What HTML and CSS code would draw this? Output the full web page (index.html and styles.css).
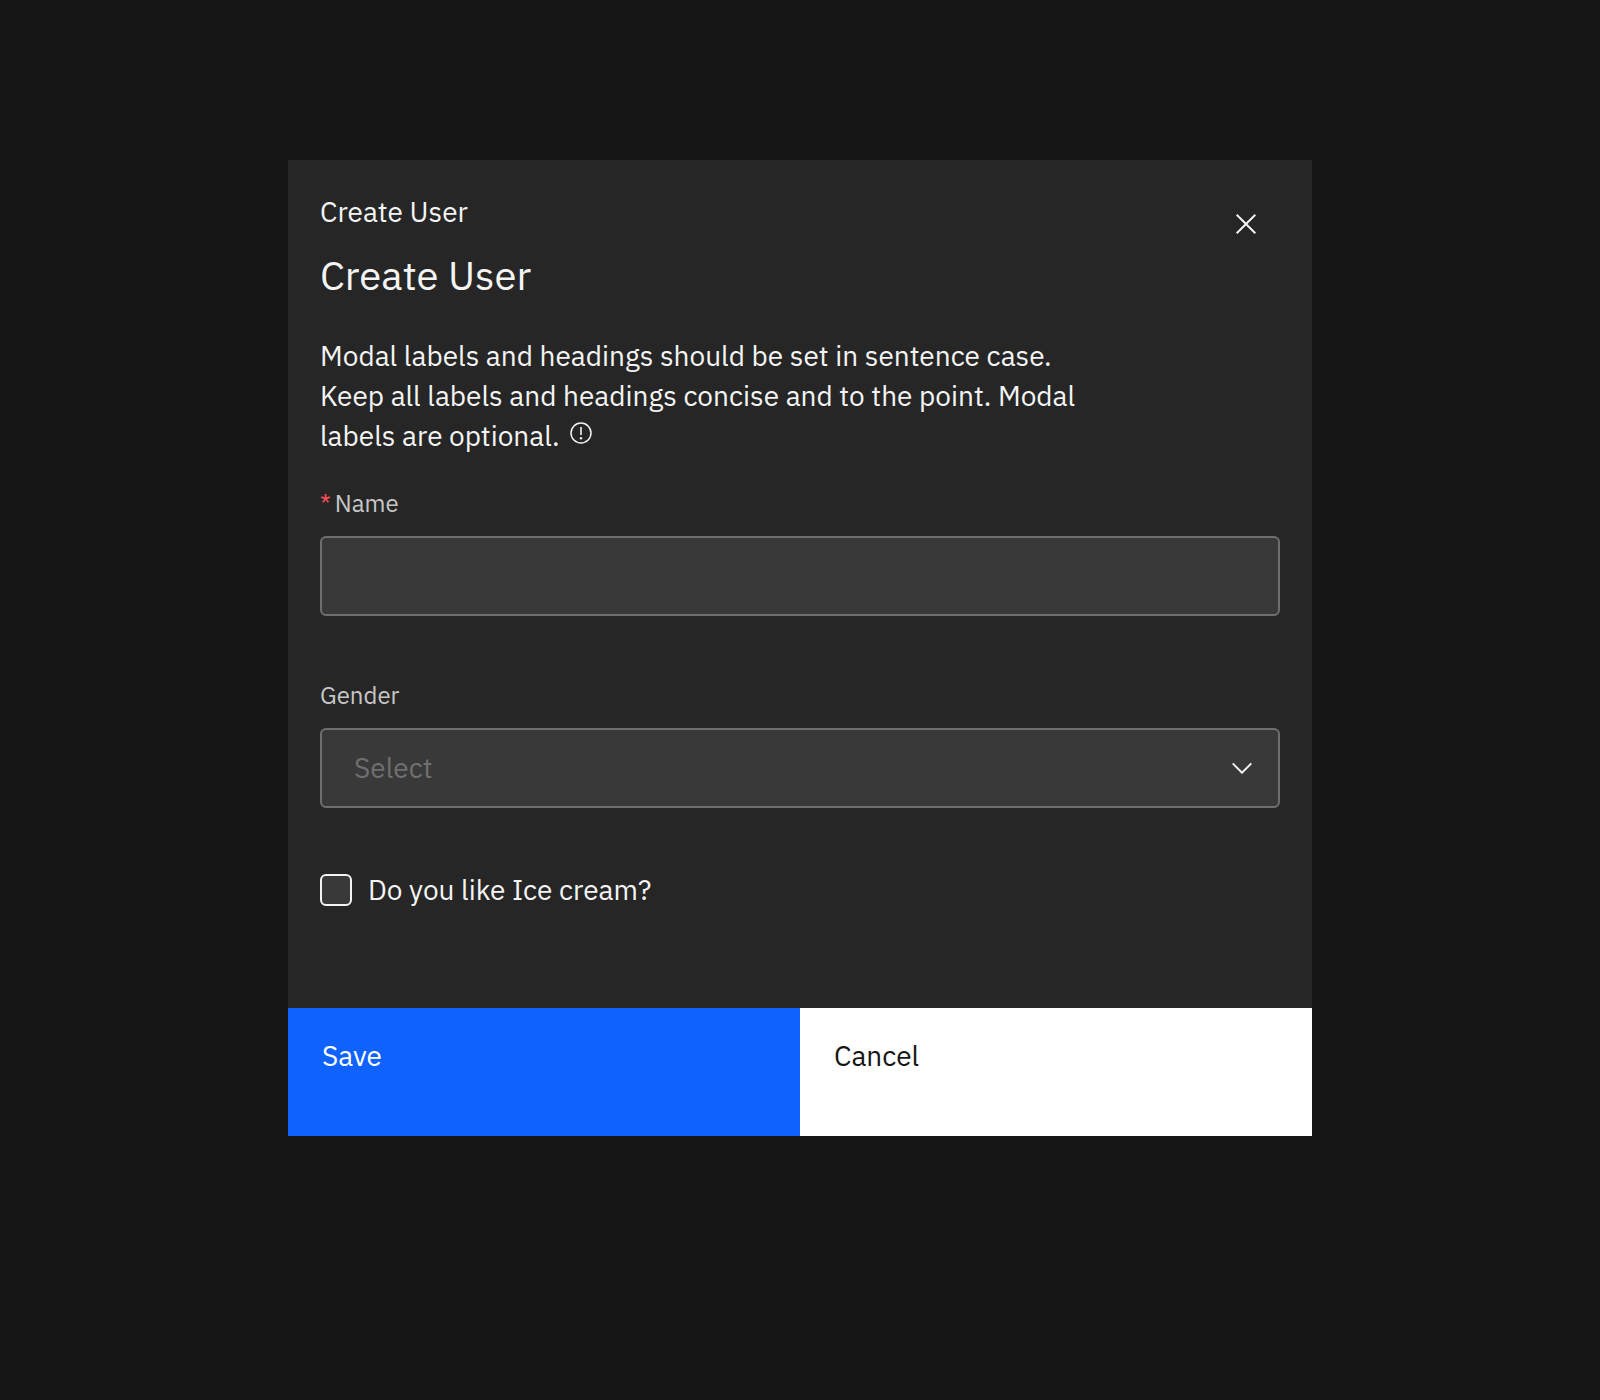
FILE: index.html
```html
<!DOCTYPE html>
<html lang="en">
<head>
<meta charset="utf-8">
<meta name="viewport" content="width=device-width, initial-scale=1">
<title>Create User</title>
<link rel="stylesheet" href="styles.css">
</head>
<body>
<main class="page">
  <form class="modal" role="dialog" aria-labelledby="modal-title">
    <header class="modal-header">
      <div class="modal-titles">
        <p class="modal-label">Create User</p>
        <h1 class="modal-heading" id="modal-title">Create User</h1>
      </div>
      <button class="close-button" type="button" aria-label="Close">
        <svg class="icon" viewBox="0 0 20 20" width="20" height="20"><path d="M.7.7 19.3 19.3M19.3.7.7 19.3" fill="none" stroke="currentColor" stroke-width="2"/></svg>
      </button>
    </header>
    <div class="modal-body">
      <p class="description">Modal labels and headings should be set in sentence case. Keep all labels and headings concise and to the point. Modal labels are optional.
        <svg class="info-icon" viewBox="0 0 22 24" width="22" height="24" aria-hidden="true"><circle cx="11" cy="11" r="10" fill="none" stroke="currentColor" stroke-width="1.5"/><path d="M11 5v8" stroke="currentColor" stroke-width="1.6"/><circle cx="11" cy="16.3" r="1.2" fill="currentColor"/></svg>
      </p>
      <div class="field">
        <label class="field-label" for="name"><span class="required">*</span>Name</label>
        <input class="control" id="name" type="text" required>
      </div>
      <div class="field">
        <label class="field-label" for="gender">Gender</label>
        <div class="select-wrap">
          <select class="control select" id="gender">
            <option value="">Select</option>
          </select>
          <svg class="chevron" viewBox="0 0 20 12" width="20" height="12" aria-hidden="true"><path d="M.7 1.4 10 10.7 19.3 1.4" fill="none" stroke="currentColor" stroke-width="2"/></svg>
        </div>
      </div>
      <div class="check-row">
        <input class="checkbox" id="ice-cream" type="checkbox">
        <label class="check-label" for="ice-cream">Do you like Ice cream?</label>
      </div>
    </div>
    <footer class="modal-footer">
      <button class="button button-primary" type="submit">Save</button>
      <button class="button button-secondary" type="button">Cancel</button>
    </footer>
  </form>
</main>
</body>
</html>
```
FILE: styles.css
```css
*,
*::before,
*::after {
  box-sizing: border-box;
}

body {
  margin: 0;
  background: #161616;
  color: #f4f4f4;
  font-family: "IBM Plex Sans", "Noto Sans", sans-serif;
  font-size: 28px;
  line-height: 40px;
}

p,
h1 {
  margin: 0;
}

button,
input,
select {
  font: inherit;
}

.page {
  min-height: 100vh;
  padding: 160px 18%;
}

.modal {
  background: #262626;
}

.modal-header {
  display: flex;
  justify-content: space-between;
  align-items: flex-start;
  padding: 32px 32px 0;
}

.modal-titles {
  display: grid;
  gap: 16px;
}

.modal-heading {
  font-size: 40px;
  font-weight: 400;
  line-height: 54px;
}

.close-button {
  display: grid;
  place-items: center;
  width: 68px;
  height: 64px;
  padding: 0;
  border: 0;
  background: none;
  color: #f4f4f4;
}

.modal-body {
  padding: 34px 32px 100px;
}

.description {
  max-width: 792px;
}

.info-icon {
  margin-left: 4px;
}

.field {
  display: grid;
  gap: 18px;
  margin-top: 32px;
}

.field + .field {
  margin-top: 64px;
}

.field-label {
  color: #c6c6c6;
  font-size: 24px;
  line-height: 30px;
}

.required {
  margin-right: 4px;
  color: #fa4d56;
}

.control {
  width: 100%;
  height: 80px;
  padding: 0 32px;
  border: 2px solid #6f6f6f;
  border-radius: 6px;
  background: #393939;
  color: #f4f4f4;
}

.select-wrap {
  display: flex;
  align-items: center;
}

.select {
  appearance: none;
  color: #6f6f6f;
}

.chevron {
  flex: none;
  margin-left: -48px;
  margin-right: 28px;
  color: #f4f4f4;
  z-index: 1;
  pointer-events: none;
}

.check-row {
  display: flex;
  align-items: center;
  gap: 16px;
  margin-top: 64px;
}

.checkbox {
  appearance: none;
  width: 32px;
  height: 32px;
  margin: 0;
  border: 2px solid #f4f4f4;
  border-radius: 6px;
  background: #393939;
}

.check-label {
  line-height: 36px;
}

.modal-footer {
  display: grid;
  grid-template-columns: 1fr 1fr;
}

.button {
  display: flex;
  height: 128px;
  padding: 28px 34px;
  border: 0;
  line-height: 40px;
}

.button-primary {
  background: #0f62fe;
  color: #fff;
}

.button-secondary {
  background: #fff;
  color: #161616;
}
```
